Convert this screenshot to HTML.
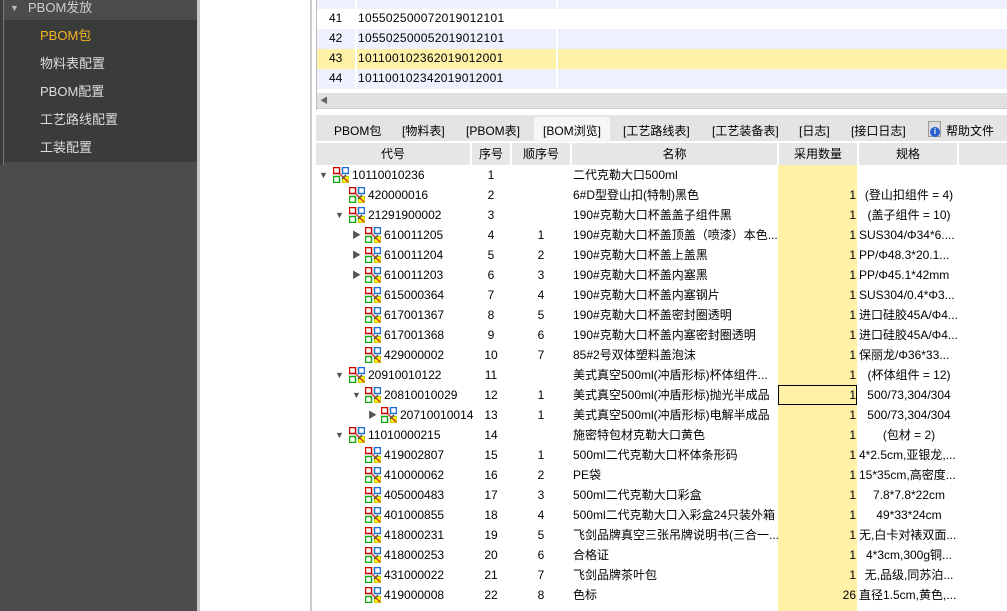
<!DOCTYPE html>
<html><head><meta charset="utf-8">
<style>
*{margin:0;padding:0;box-sizing:border-box}
body{width:1007px;height:611px;overflow:hidden;position:relative;background:#fff;font-family:"Liberation Sans","Noto Sans CJK SC",sans-serif;font-size:12px;color:#000}
.a{position:absolute;white-space:nowrap}
.side{left:0;top:0;width:197px;height:611px;background:#4b4d4a}
.sub{left:4px;top:20px;width:193px;height:142px;background:#3a3c39}
.si{color:#ddd;font-size:13px;left:40px}
.row{position:absolute;left:316px;width:691px;height:20px;line-height:20px}
.row span{position:absolute;white-space:nowrap}
.ico{position:absolute;top:2px;width:16px;height:16px}
.arr{position:absolute;font-size:9px;color:#555}
.c2{left:155px;width:40px;text-align:center}
.c3{left:195px;width:60px;text-align:center}
.c4{left:257px}
.c5{left:462px;width:78px;text-align:right}
.c6{left:543px;width:100px;overflow:hidden}
.ce{text-align:center}
</style></head><body>
<div class="a side"></div>
<div class="a" style="left:0;top:0;width:4px;height:165px;background:#3a3c39;border-right:1px solid #777"></div>
<div class="a sub"></div>
<div class="a" style="left:10px;top:3px;color:#bbb;font-size:9px">▼</div>
<div class="a" style="left:28px;top:0;color:#ccc;font-size:13px;line-height:16px">PBOM发放</div>
<div class="a si" style="top:25px;color:#f5b321">PBOM包</div>
<div class="a si" style="top:53px">物料表配置</div>
<div class="a si" style="top:81px">PBOM配置</div>
<div class="a si" style="top:109px">工艺路线配置</div>
<div class="a si" style="top:137px">工装配置</div>
<div class="a" style="left:197px;top:0;width:3px;height:611px;background:#c8c8c8"></div>
<div class="a" style="left:310px;top:0;width:2px;height:611px;background:#ccc"></div>
<div class="a" style="left:316px;top:0;width:1px;height:110px;background:#bbb"></div>
<!-- top table -->
<div class="a" style="left:317px;top:0;width:690px;height:9px;background:#eef1fd"></div>
<div class="a" style="left:317px;top:29px;width:690px;height:20px;background:#eef1fd"></div>
<div class="a" style="left:317px;top:49px;width:690px;height:20px;background:#fff2a8"></div>
<div class="a" style="left:317px;top:69px;width:690px;height:20px;background:#eef1fd"></div>
<div class="a" style="left:355px;top:0;width:2px;height:90px;background:#fff"></div>
<div class="a" style="left:556px;top:0;width:2px;height:90px;background:#fff"></div>
<div class="a" style="left:329px;top:11px">41</div><div class="a" style="left:358px;top:11px;letter-spacing:0.3px">105502500072019012101</div>
<div class="a" style="left:329px;top:31px">42</div><div class="a" style="left:358px;top:31px;letter-spacing:0.3px">105502500052019012101</div>
<div class="a" style="left:329px;top:51px">43</div><div class="a" style="left:358px;top:51px;letter-spacing:0.3px">101100102362019012001</div>
<div class="a" style="left:329px;top:71px">44</div><div class="a" style="left:358px;top:71px;letter-spacing:0.3px">101100102342019012001</div>
<div class="a" style="left:317px;top:93px;width:690px;height:16px;background:#e1e1e1;border-bottom:1px solid #ccc"></div>
<div class="a" style="left:320px;top:95px;font-size:8px;color:#666">◀</div>
<!-- tabs -->
<div class="a" style="left:316px;top:115px;width:691px;height:26px;background:#e4e4e4"></div>
<div class="a" style="left:534px;top:117px;width:76px;height:25px;background:#f6f6f6;border-radius:3px 3px 0 0"></div>
<div class="a" style="left:334px;top:122px">PBOM包</div>
<div class="a" style="left:402px;top:122px">[物料表]</div>
<div class="a" style="left:466px;top:122px">[PBOM表]</div>
<div class="a" style="left:543px;top:122px">[BOM浏览]</div>
<div class="a" style="left:623px;top:122px">[工艺路线表]</div>
<div class="a" style="left:712px;top:122px">[工艺装备表]</div>
<div class="a" style="left:799px;top:122px">[日志]</div>
<div class="a" style="left:851px;top:122px">[接口日志]</div>
<div class="a" style="left:928px;top:121px;width:13px;height:16px;background:#ddd;border:1px solid #999"></div>
<div class="a" style="left:930px;top:127px;width:10px;height:10px;border-radius:50%;background:#2a5fd0;color:#fff;font-size:8px;line-height:10px;text-align:center;font-weight:bold">i</div>
<div class="a" style="left:946px;top:122px">帮助文件</div>
<!-- header -->
<div class="a" style="left:316px;top:143px;width:691px;height:22px;background:#e6e6e6;line-height:22px">
<span class="a" style="left:0;width:154px;text-align:center">代号</span>
<span class="a" style="left:154px;width:2px;height:22px;background:#fff"></span>
<span class="a" style="left:156px;width:38px;text-align:center">序号</span>
<span class="a" style="left:194px;width:2px;height:22px;background:#fff"></span>
<span class="a" style="left:196px;width:58px;text-align:center">顺序号</span>
<span class="a" style="left:254px;width:2px;height:22px;background:#fff"></span>
<span class="a" style="left:256px;width:205px;text-align:center">名称</span>
<span class="a" style="left:461px;width:2px;height:22px;background:#fff"></span>
<span class="a" style="left:463px;width:78px;text-align:center">采用数量</span>
<span class="a" style="left:541px;width:2px;height:22px;background:#fff"></span>
<span class="a" style="left:543px;width:98px;text-align:center">规格</span>
<span class="a" style="left:641px;width:2px;height:22px;background:#fff"></span>
</div>
<div class="a" style="left:778px;top:165px;width:79px;height:446px;background:#fff2a8"></div>
<div class="a" style="left:778px;top:385px;width:79px;height:20px;border:1px solid #000"></div>
<svg width="0" height="0" style="position:absolute"><defs><g id="ic">
<rect x="0.5" y="0.5" width="6" height="6" fill="#fff" stroke="#c00" stroke-width="1.5"/>
<rect x="9.5" y="0.5" width="6" height="6" fill="#fff" stroke="#1b6fd6" stroke-width="1.5"/>
<rect x="0.5" y="9.5" width="6" height="6" fill="#fff" stroke="#1a1" stroke-width="1.5"/>
<rect x="9.5" y="9.5" width="6" height="6" fill="#ff0" stroke="#cc0" stroke-width="1"/>
<path d="M7 7 L15 15" stroke="#c33" stroke-width="1.5"/><path d="M9 12 L13 8" stroke="#555" stroke-width="1.5"/>
</g></defs></svg>
<!-- rows -->
<div class="row" style="top:165px"><span class="arr" style="left:3px">▼</span><svg class="ico" style="left:17px"><use href="#ic"/></svg><span style="left:36px">10110010236</span><span class="c2">1</span><span class="c4">二代克勒大口500ml</span></div>
<div class="row" style="top:185px"><svg class="ico" style="left:33px"><use href="#ic"/></svg><span style="left:52px">420000016</span><span class="c2">2</span><span class="c4">6#D型登山扣(特制)黑色</span><span class="c5">1</span><span class="c6 ce">(登山扣组件 = 4)</span></div>
<div class="row" style="top:205px"><span class="arr" style="left:19px">▼</span><svg class="ico" style="left:33px"><use href="#ic"/></svg><span style="left:52px">21291900002</span><span class="c2">3</span><span class="c4">190#克勒大口杯盖盖子组件黑</span><span class="c5">1</span><span class="c6 ce">(盖子组件 = 10)</span></div>
<div class="row" style="top:225px"><span class="arr" style="left:36px">▶</span><svg class="ico" style="left:49px"><use href="#ic"/></svg><span style="left:68px">610011205</span><span class="c2">4</span><span class="c3">1</span><span class="c4">190#克勒大口杯盖顶盖（喷漆）本色...</span><span class="c5">1</span><span class="c6">SUS304/Φ34*6....</span></div>
<div class="row" style="top:245px"><span class="arr" style="left:36px">▶</span><svg class="ico" style="left:49px"><use href="#ic"/></svg><span style="left:68px">610011204</span><span class="c2">5</span><span class="c3">2</span><span class="c4">190#克勒大口杯盖上盖黑</span><span class="c5">1</span><span class="c6">PP/Φ48.3*20.1...</span></div>
<div class="row" style="top:265px"><span class="arr" style="left:36px">▶</span><svg class="ico" style="left:49px"><use href="#ic"/></svg><span style="left:68px">610011203</span><span class="c2">6</span><span class="c3">3</span><span class="c4">190#克勒大口杯盖内塞黑</span><span class="c5">1</span><span class="c6">PP/Φ45.1*42mm</span></div>
<div class="row" style="top:285px"><svg class="ico" style="left:49px"><use href="#ic"/></svg><span style="left:68px">615000364</span><span class="c2">7</span><span class="c3">4</span><span class="c4">190#克勒大口杯盖内塞钢片</span><span class="c5">1</span><span class="c6">SUS304/0.4*Φ3...</span></div>
<div class="row" style="top:305px"><svg class="ico" style="left:49px"><use href="#ic"/></svg><span style="left:68px">617001367</span><span class="c2">8</span><span class="c3">5</span><span class="c4">190#克勒大口杯盖密封圈透明</span><span class="c5">1</span><span class="c6">进口硅胶45A/Φ4...</span></div>
<div class="row" style="top:325px"><svg class="ico" style="left:49px"><use href="#ic"/></svg><span style="left:68px">617001368</span><span class="c2">9</span><span class="c3">6</span><span class="c4">190#克勒大口杯盖内塞密封圈透明</span><span class="c5">1</span><span class="c6">进口硅胶45A/Φ4...</span></div>
<div class="row" style="top:345px"><svg class="ico" style="left:49px"><use href="#ic"/></svg><span style="left:68px">429000002</span><span class="c2">10</span><span class="c3">7</span><span class="c4">85#2号双体塑料盖泡沫</span><span class="c5">1</span><span class="c6">保丽龙/Φ36*33...</span></div>
<div class="row" style="top:365px"><span class="arr" style="left:19px">▼</span><svg class="ico" style="left:33px"><use href="#ic"/></svg><span style="left:52px">20910010122</span><span class="c2">11</span><span class="c4">美式真空500ml(冲盾形标)杯体组件...</span><span class="c5">1</span><span class="c6 ce">(杯体组件 = 12)</span></div>
<div class="row" style="top:385px"><span class="arr" style="left:36px">▼</span><svg class="ico" style="left:49px"><use href="#ic"/></svg><span style="left:68px">20810010029</span><span class="c2">12</span><span class="c3">1</span><span class="c4">美式真空500ml(冲盾形标)抛光半成品</span><span class="c5">1</span><span class="c6 ce">500/73,304/304</span></div>
<div class="row" style="top:405px"><span class="arr" style="left:52px">▶</span><svg class="ico" style="left:65px"><use href="#ic"/></svg><span style="left:84px">20710010014</span><span class="c2">13</span><span class="c3">1</span><span class="c4">美式真空500ml(冲盾形标)电解半成品</span><span class="c5">1</span><span class="c6 ce">500/73,304/304</span></div>
<div class="row" style="top:425px"><span class="arr" style="left:19px">▼</span><svg class="ico" style="left:33px"><use href="#ic"/></svg><span style="left:52px">11010000215</span><span class="c2">14</span><span class="c4">施密特包材克勒大口黄色</span><span class="c5">1</span><span class="c6 ce">(包材 = 2)</span></div>
<div class="row" style="top:445px"><svg class="ico" style="left:49px"><use href="#ic"/></svg><span style="left:68px">419002807</span><span class="c2">15</span><span class="c3">1</span><span class="c4">500ml二代克勒大口杯体条形码</span><span class="c5">1</span><span class="c6">4*2.5cm,亚银龙,...</span></div>
<div class="row" style="top:465px"><svg class="ico" style="left:49px"><use href="#ic"/></svg><span style="left:68px">410000062</span><span class="c2">16</span><span class="c3">2</span><span class="c4">PE袋</span><span class="c5">1</span><span class="c6">15*35cm,高密度...</span></div>
<div class="row" style="top:485px"><svg class="ico" style="left:49px"><use href="#ic"/></svg><span style="left:68px">405000483</span><span class="c2">17</span><span class="c3">3</span><span class="c4">500ml二代克勒大口彩盒</span><span class="c5">1</span><span class="c6 ce">7.8*7.8*22cm</span></div>
<div class="row" style="top:505px"><svg class="ico" style="left:49px"><use href="#ic"/></svg><span style="left:68px">401000855</span><span class="c2">18</span><span class="c3">4</span><span class="c4">500ml二代克勒大口入彩盒24只装外箱</span><span class="c5">1</span><span class="c6 ce">49*33*24cm</span></div>
<div class="row" style="top:525px"><svg class="ico" style="left:49px"><use href="#ic"/></svg><span style="left:68px">418000231</span><span class="c2">19</span><span class="c3">5</span><span class="c4">飞剑品牌真空三张吊牌说明书(三合一...</span><span class="c5">1</span><span class="c6">无,白卡对裱双面...</span></div>
<div class="row" style="top:545px"><svg class="ico" style="left:49px"><use href="#ic"/></svg><span style="left:68px">418000253</span><span class="c2">20</span><span class="c3">6</span><span class="c4">合格证</span><span class="c5">1</span><span class="c6 ce">4*3cm,300g铜...</span></div>
<div class="row" style="top:565px"><svg class="ico" style="left:49px"><use href="#ic"/></svg><span style="left:68px">431000022</span><span class="c2">21</span><span class="c3">7</span><span class="c4">飞剑品牌茶叶包</span><span class="c5">1</span><span class="c6 ce">无,品级,同苏泊...</span></div>
<div class="row" style="top:585px"><svg class="ico" style="left:49px"><use href="#ic"/></svg><span style="left:68px">419000008</span><span class="c2">22</span><span class="c3">8</span><span class="c4">色标</span><span class="c5">26</span><span class="c6">直径1.5cm,黄色,...</span></div>
</body></html>
